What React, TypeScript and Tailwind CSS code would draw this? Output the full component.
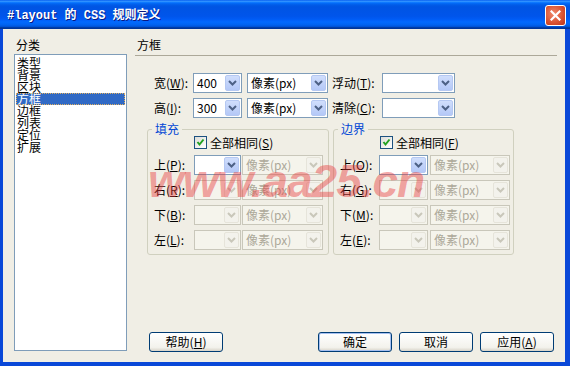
import React from "react";

const Chevron = () => (
  <svg width="9" height="6" viewBox="0 0 9 6">
    <path d="M1 1 L4.5 4.5 L8 1" stroke="currentColor" strokeWidth="2" fill="none" />
  </svg>
);

function M({ k }: { k: string }) {
  return (
    <span>
      (<span className="underline">{k}</span>)
    </span>
  );
}

function Combo({ w, value, field, arrow }: { w: string; value?: string; field: "on" | "off"; arrow: "on" | "off" }) {
  const fieldOn = field === "on";
  const arrowOn = arrow === "on";
  return (
    <div
      className={`${w} h-[20px] flex items-stretch border p-[1px] ${
        fieldOn ? "border-[#7f9db9] bg-white" : "border-[#c9c7ba] bg-[#f5f4ec]"
      }`}
    >
      <div
        className={`flex-1 flex items-center pl-[2px] text-[12px] leading-[12px] whitespace-nowrap ${
          fieldOn ? "text-black" : "text-[#aca899]"
        }`}
      >
        {value}
      </div>
      <div
        className={`w-[15px] rounded-[2px] flex items-center justify-center border ${
          arrowOn
            ? "bg-[linear-gradient(#d0defc,#b4c8f7)] border-[#b5c8f2] text-[#4d6185]"
            : "bg-[#f3f2ec] border-[#e6e4da] text-[#c9c7ba]"
        }`}
      >
        <Chevron />
      </div>
    </div>
  );
}

function Check() {
  return (
    <div className="w-[13px] h-[13px] border border-[#1c5180] bg-[linear-gradient(135deg,#dcdcd7,#ffffff)] flex items-center justify-center">
      <svg width="11" height="11" viewBox="0 0 11 11">
        <path d="M2.5 5 L4.5 7.5 L8.5 2.5" stroke="#21a121" strokeWidth="2" fill="none" />
      </svg>
    </div>
  );
}

function Btn({ children, def }: { children: React.ReactNode; def?: boolean }) {
  return (
    <div
      className={`w-[74px] h-[20px] rounded-[3px] border border-[#003c74] bg-[linear-gradient(#ffffff,#f3f2ec_80%,#d8d3c8)] flex items-center justify-center text-[12px] leading-[12px] text-black ${
        def ? "shadow-[inset_0_0_0_1px_#a6c0f0]" : ""
      }`}
    >
      {children}
    </div>
  );
}

type Row = { lab: string; k: string; first: boolean };

function Group({
  title,
  k,
  labW,
  inW,
  gapCls,
  unitW,
  w,
  rows,
}: {
  title: string;
  k: string;
  labW: string;
  inW: string;
  gapCls: string;
  unitW: string;
  w: string;
  rows: Row[];
}) {
  return (
    <div className={`${w} h-[126px] relative border border-[#d0d0bf] rounded-[3px] pt-[6px] pl-[6px]`}>
      <div className="absolute left-[4px] -top-[7px] px-[3px] bg-[#f0eee5] text-[#0046d5] text-[12px] leading-[12px]">
        {title}
      </div>
      <div className={`flex items-center h-[13px] ${labW === "w-[40px]" ? "ml-[40px]" : "ml-[40px]"}`}>
        <Check />
        <span className="ml-[3px] text-[12px] leading-[12px]">
          全部相同<M k={k} />
        </span>
      </div>
      <div className="mt-[6px] flex flex-col gap-[5px]">
        {rows.map((r) => (
          <div key={r.lab} className="flex items-center h-[20px]">
            <div className={`${labW} text-[12px] leading-[12px] whitespace-nowrap`}>
              {r.lab}
              <M k={r.k} />:
            </div>
            <Combo w={inW} field={r.first ? "on" : "off"} arrow={r.first ? "on" : "off"} />
            <div className={gapCls}>
              <Combo w={unitW} value="像素(px)" field="off" arrow="off" />
            </div>
          </div>
        ))}
      </div>
    </div>
  );
}

export default function App() {
  const items = ["类型", "背景", "区块", "方框", "边框", "列表", "定位", "扩展"];
  return (
    <div className="relative w-[570px] h-[366px] flex flex-col bg-[#0a48d8] font-['Noto_Sans_CJK_SC',sans-serif] text-black overflow-hidden">
      {/* title bar */}
      <div className="h-[29px] flex items-center bg-[linear-gradient(#0058ee_0%,#3593ff_4%,#288eff_6%,#127dff_8%,#036ffc_10%,#0262ee_14%,#0057e5_20%,#0054e3_24%,#0055eb_56%,#005bf5_66%,#026afe_76%,#0062ef_86%,#0052d6_92%,#0040ab_94%,#003092_100%)]">
        <div className="ml-[7px] pt-[3px] text-white font-bold text-[12px] leading-[12px] font-['Liberation_Mono','Noto_Sans_CJK_SC',monospace] whitespace-pre [text-shadow:1px_1px_0_#0a1883]">
          #layout 的 CSS 规则定义
        </div>
        <div className="ml-auto mr-[4px] mt-[2px] w-[21px] h-[21px] rounded-[3px] border border-white bg-[radial-gradient(circle_at_40%_40%,#f08a6c,#d9502f_60%,#b8351a)] flex items-center justify-center">
          <svg width="11" height="11" viewBox="0 0 11 11">
            <path d="M1.5 1.5 L9.5 9.5 M9.5 1.5 L1.5 9.5" stroke="white" strokeWidth="2.2" strokeLinecap="square" />
          </svg>
        </div>
      </div>

      {/* body */}
      <div className="flex-1 flex ml-[3px] mr-[5px] mb-[4px] bg-[#f0eee5] pt-[10px] pl-[11px] pr-[8px] gap-[8px]">
        {/* left */}
        <div className="w-[113px] flex flex-col">
          <div className="h-[15px] pl-[2px] text-[12px] leading-[12px]">分类</div>
          <div className="h-[297px] border border-[#7f9db9] bg-white pt-[2px] px-[1px]">
            {items.map((t) => (
              <div
                key={t}
                className={`h-[12px] pl-[1px] text-[12px] leading-[12px] ${
                  t === "方框"
                    ? "bg-[#316ac5] text-white outline-1 outline-dotted outline-[#e0b060] -outline-offset-1"
                    : ""
                }`}
              >
                {t}
              </div>
            ))}
          </div>
        </div>

        {/* right */}
        <div className="flex-1 flex flex-col">
          <div className="h-[17px] border-b border-[#aca899] pl-[2px] text-[12px] leading-[12px]">方框</div>

          <div className="mt-[17px] pl-[19px] flex items-center h-[20px]">
            <div className="w-[39px] text-[12px] leading-[12px] whitespace-nowrap">
              宽<M k="W" />:
            </div>
            <Combo w="w-[49px]" value="400" field="on" arrow="on" />
            <div className="ml-[5px]">
              <Combo w="w-[81px]" value="像素(px)" field="on" arrow="on" />
            </div>
            <div className="ml-[4px] w-[50px] text-[12px] leading-[12px] whitespace-nowrap">
              浮动<M k="T" />:
            </div>
            <Combo w="w-[73px]" field="on" arrow="on" />
          </div>
          <div className="mt-[5px] pl-[19px] flex items-center h-[20px]">
            <div className="w-[39px] text-[12px] leading-[12px] whitespace-nowrap">
              高<M k="I" />:
            </div>
            <Combo w="w-[49px]" value="300" field="on" arrow="on" />
            <div className="ml-[5px]">
              <Combo w="w-[81px]" value="像素(px)" field="on" arrow="on" />
            </div>
            <div className="ml-[4px] w-[50px] text-[12px] leading-[12px] whitespace-nowrap">
              清除<M k="C" />:
            </div>
            <Combo w="w-[73px]" field="on" arrow="on" />
          </div>

          <div className="mt-[11px] pl-[12px] flex gap-[4px]">
            <Group
              title="填充"
              k="S"
              w="w-[182px]"
              labW="w-[40px]"
              inW="w-[47px]"
              gapCls="ml-[1px]"
              unitW="w-[81px]"
              rows={[
                { lab: "上", k: "P", first: true },
                { lab: "右", k: "R", first: false },
                { lab: "下", k: "B", first: false },
                { lab: "左", k: "L", first: false },
              ]}
            />
            <Group
              title="边界"
              k="F"
              w="w-[181px]"
              labW="w-[39px]"
              inW="w-[49px]"
              gapCls="ml-[2px]"
              unitW="w-[80px]"
              rows={[
                { lab: "上", k: "O", first: true },
                { lab: "右", k: "G", first: false },
                { lab: "下", k: "M", first: false },
                { lab: "左", k: "E", first: false },
              ]}
            />
          </div>

          <div className="mt-auto mb-[10px] pl-[14px] pr-[3px] flex items-center">
            <Btn>
              帮助<M k="H" />
            </Btn>
            <div className="ml-auto flex gap-[7px]">
              <Btn def>确定</Btn>
              <Btn>取消</Btn>
              <Btn>
                应用<M k="A" />
              </Btn>
            </div>
          </div>
        </div>
      </div>

      {/* watermark */}
      <div className="absolute left-[148px] top-[158px] pointer-events-none font-['Liberation_Sans',sans-serif] font-bold italic text-[46px] leading-none tracking-[-1px] text-[rgba(232,60,60,0.45)] whitespace-nowrap">
        www.aa25.cn
      </div>
    </div>
  );
}
